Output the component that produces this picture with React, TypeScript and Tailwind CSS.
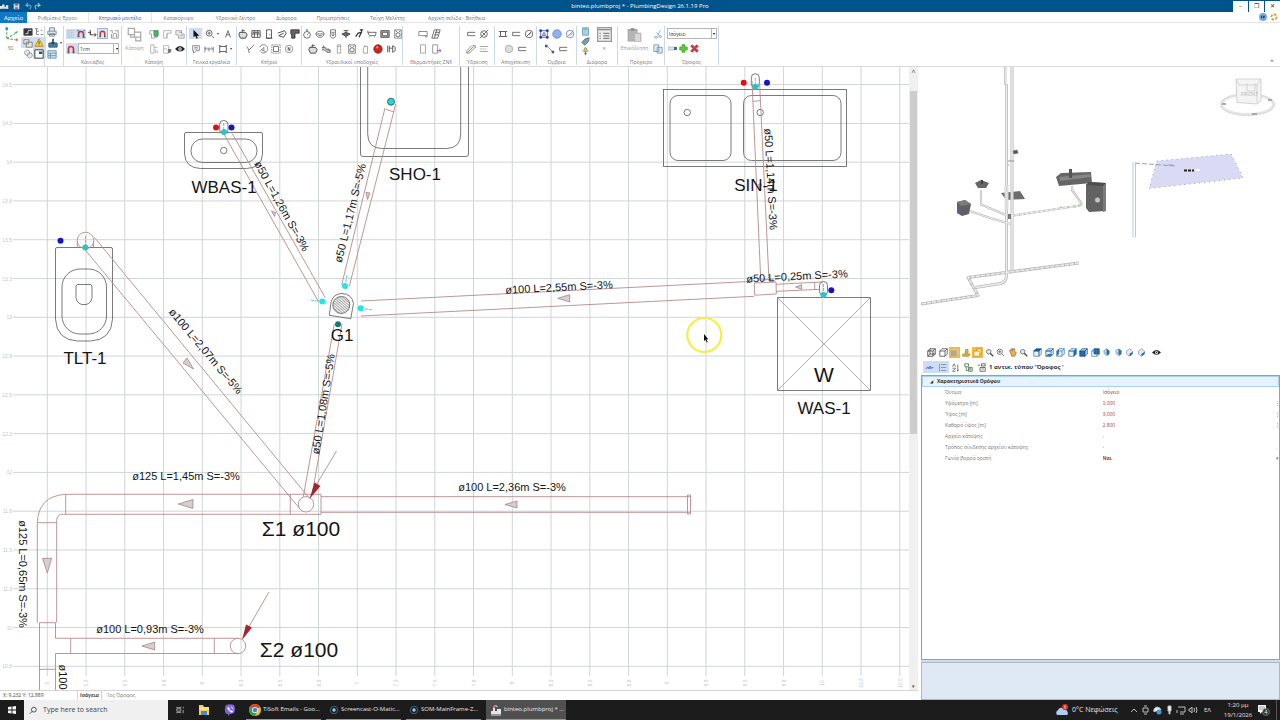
import { ReactNode } from "react";
import clsx from "clsx";

const tabs = [
  { label: "Ρυθμίσεις Έργου", width: "w-[61px]" },
  { label: "Κτηριακό μοντέλο", width: "w-[64px]", active: true },
  { label: "Κατακόρυφο", width: "w-[53px]" },
  { label: "Υδρονικό δέντρο", width: "w-[61px]" },
  { label: "Διάφορα", width: "w-[41px]" },
  { label: "Προμετρήσεις", width: "w-[52px]" },
  { label: "Τεύχη Μελέτης", width: "w-[57px]" },
  { label: "Αρχική σελίδα - Βοήθεια", width: "w-[81px]" },
];

const properties = [
  { id: "name", label: "Όνομα", value: "Ισόγειο" },
  { id: "elevation", label: "Υψόμετρο [m]", value: "0,000", mark: "⋮" },
  { id: "height", label: "Ύψος [m]", value: "3,000", mark: "⋮" },
  { id: "clear", label: "Καθαρό ύψος [m]", value: "2,800", mark: "⋮" },
  { id: "file", label: "Αρχείο κάτοψης", value: "-" },
  { id: "link", label: "Τρόπος σύνδεσης αρχείου κάτοψης", value: "-", mark: "." },
  { id: "north", label: "Γωνία βορρά ορατή", value: "Ναι", mark: "▾", bold: true },
];

// All glyphs are drawn on a 12x12 grid
const glyphs: Record<string, ReactNode> = {
  axes: (
    <>
      <path d="M3 10 3 2M3 10l7-4M3 10l7 1" stroke="#6fae7d" strokeDasharray="2 1" />
      <path d="m9 5 3-1-1 2z" fill="#34b44a" stroke="none" />
      <circle cx="3" cy="2" r="1.2" fill="#2d8fd5" stroke="none" />
      <circle cx="11" cy="11" r="1" fill="#d66" stroke="none" />
    </>
  ),
  view: (
    <>
      <path d="M1 2h10v8H1z" fill="#333" />
      <path d="M3 8h3V5M6 4h4" stroke="#fff" />
    </>
  ),
  tree: <path d="M1 2h4M3 2v7h3M3 5h3M8 4h2M8 9h3" stroke="#777" />,
  layers: <path d="M1 2h6v5H1zM4 5h7v6H4z" fill="#e8e8da" stroke="#777" />,
  warn: (
    <>
      <path d="m6 1 5 9H1z" fill="#ffd42a" stroke="#a8851c" />
      <path d="M6 4v3M6 8v1" stroke="#222" />
    </>
  ),
  cubes: <path d="m2 3 3-2 3 2v3L5 8 2 6zM5 6l3-2 3 2v3l-3 2-3-2z" fill="#e7eef0" stroke="#8a9aa0" />,
  windowIcon: (
    <>
      <path d="M1 1h10v10H1z" fill="#fff" stroke="#222" />
      <path d="M6 3h4v3H6z" fill="#35506e" stroke="none" />
    </>
  ),
  printer: <path d="M3 5V1h6v4M1 5h10v4H1zM3 8h6v3H3z" fill="#dde6ec" stroke="#6f8490" />,
  save: (
    <>
      <path d="M1 6h10v5H1z" fill="#4a7a9c" stroke="#31536d" />
      <path d="M5 1h2v4h2L6 8 3 5h2z" fill="#234a69" stroke="none" />
    </>
  ),
  sheet: <path d="M1 2h10v9H1zM1 5h10M1 8h10M4 5v6" fill="#cfe1ee" stroke="#5f8fb0" />,
  dots: <path d="M2 2h8M2 4h8M2 6h8M2 8h8M2 10h8" stroke="#a9b7cc" strokeDasharray="1 1" />,
  snap: (
    <>
      <path d="M3 10V6a3 3 0 0 1 6 0v4" stroke="#a23b50" strokeWidth="2" />
      <path d="M1 2h3M9 2h2M2 9h2M8 10h3" stroke="#4a5a80" />
    </>
  ),
  ortho: <path d="M4 1v6h7M1 4h3v3M9 5l2 2-2 2" stroke="#333" />,
  magnet: (
    <>
      <path d="M3 10V6a3 3 0 0 1 6 0v4" stroke="#c33a3a" strokeWidth="2" />
      <path d="M2 10h2M8 10h2" stroke="#555" strokeWidth="2" />
    </>
  ),
  magnetGrey: <path d="M1 2h3v3M7 2h4v9H3V6M5 10V7a2 2 0 0 1 4 0v3" stroke="#8d8d8d" />,
  plan: <path d="M1 1h5v3h5v7H7V8H3V6H1zM6 4v4M3 6h3M7 8h4" stroke="#aaa" />,
  pin: (
    <>
      <path d="M1 2h6v9H3V6H1z" stroke="#999" />
      <path d="M6 2h5v6l-2 2-3-2z" fill="#4fb466" stroke="#3a8b4c" />
    </>
  ),
  planA: <path d="M2 11V2h9v3H6v6zM6 5v6" stroke="#aaa" />,
  planB: <path d="M1 2h7v4h3v5H4V7H1zM5 4h3M6 8h3" stroke="#999" fill="#eee" />,
  planC: <path d="M2 1h4v10H2zM6 4h4M8 6v5M10 8v3" stroke="#aaa" />,
  planD: (
    <>
      <path d="M2 2h6v9H2zM2 6h4" stroke="#aaa" />
      <path d="M7 6h4v4l-4 1z" fill="#777" stroke="none" />
    </>
  ),
  eye: (
    <>
      <path d="M0 6q6-7 12 0-6 6-12 0z" fill="#222" stroke="none" />
      <circle cx="6" cy="6" r="2" fill="#fff" stroke="none" />
      <circle cx="6" cy="6" r="1" fill="#222" stroke="none" />
    </>
  ),
  pointer: <path d="M3 1v9l2-2 2 4 1-1-1-3h3z" fill="#111" stroke="none" />,
  zoom: (
    <>
      <circle cx="5" cy="5" r="3.5" />
      <path d="m8 8 3 3M3 5h4M5 3v4" />
    </>
  ),
  letterA: <path d="M3 10 6 2l3 8M4 7h4" stroke="#555" />,
  note: <path d="M2 2h8v6H6l-3 3V8H2zM4 4h4M4 6h4" stroke="#777" />,
  dimension: <path d="M1 3v7M11 3v7M6 4v5M1 6h10M1 6l2-2M11 6 9 4" stroke="#777" />,
  frame: <path d="M2 3h8v6H2zM1 2h2M9 2h2M1 10h2M9 10h2" stroke="#444" />,
  cup: <path d="M2 4h7l2 3-2 4H3L1 7zM5 4V1l3 1" stroke="#333" fill="#ddd" />,
  grid4: <path d="M1 2h10v8H1zM4 2v8M8 2v8M1 6h10M2 4h8" stroke="#444" />,
  door: <path d="M3 11V1h6v10zM7 6v1M2 11h8" stroke="#444" />,
  roof: <path d="m1 5 8-3 2 3-3 5-6-2 6-3" stroke="#333" />,
  corner: <path d="M1 1h10v4H6v6H2V6H1z" fill="#666" stroke="#333" />,
  brush: <path d="m2 3 2 3 1 5M11 1 5 7" stroke="#666" />,
  globe: <path d="M2 4a5 5 0 1 1 2 6M2 9l5-5M7 4v4M4 7l5 2" stroke="#777" />,
  square: (
    <>
      <path d="M1 1h10v10H1z" stroke="#777" strokeDasharray="2 1" />
      <path d="M3 3h6v6H3z" stroke="#666" />
    </>
  ),
  circleN: (
    <>
      <circle cx="6" cy="6" r="4.5" stroke="#888" />
      <path d="M5 8V4l2 4V4" />
    </>
  ),
  clock: (
    <>
      <circle cx="6" cy="7" r="4" />
      <path d="M6 7l2-2M5 1h2M6 1v2" />
    </>
  ),
  basin: <path d="M1 5q5-5 10 0-1 5-5 5T1 5zM1 6h10M4 8h4" stroke="#666" />,
  toilet: <path d="M3 1h6v4q1 6-3 6T3 5zM4 4h4M5 5v3h2V5" stroke="#666" />,
  valve: <path d="M6 1v3M3 2h6M1 6l5-2 5 2-5 3zM6 9v2" fill="#666" stroke="#444" />,
  tap: <path d="M9 1v3L5 5l-3 4M9 4l-3 6M7 1h4" stroke="#333" strokeWidth="1.500" />,
  bath: <path d="M1 4h10l-1 4H3L1 4V2M3 10v-1M9 10v-1" stroke="#555" />,
  hob: (
    <>
      <path d="M1 2h10v8H1z" fill="#aaa" stroke="#444" />
      <path d="M3 4h6v4H3z" fill="#fff" />
    </>
  ),
  washer: (
    <>
      <path d="M2 1h8v10H2z" stroke="#777" />
      <circle cx="6" cy="7" r="2.5" />
      <path d="M3 2l2 2M9 2 7 4" />
    </>
  ),
  faucet: <path d="M1 4h4l2 3h4v3H7L4 7H1M3 2v2M8 5l2 2" stroke="#555" fill="#ccc" />,
  tank: <path d="M4 1h4v10H4zM4 3h4" stroke="#999" />,
  boiler: <path d="M5 3h4v8H4V6zM6 1v2" stroke="#999" />,
  redBall: (
    <>
      <circle cx="6" cy="6" r="5" fill="#c9281c" stroke="#8d1c12" />
      <circle cx="5" cy="4" r="1.5" fill="#ef7a63" stroke="none" />
    </>
  ),
  meter: <path d="M2 2v8M4 2v8M4 5h4M8 2v8l3-2V4z" stroke="#444" />,
  heater: <path d="M1 3h10v5H1zM8 8l2 2 1-2" stroke="#777" />,
  solar: <path d="M4 1h7L8 11H1zM5 4h5M4 7h5M7 1 4 11" stroke="#555" />,
  tallBox: <path d="M3 1h6v10H3z" stroke="#999" />,
  boxArrow: (
    <>
      <path d="M2 1h6v10H2z" stroke="#888" />
      <path d="M7 8h5M10 6l2 2-2 2" stroke="#7a4a8a" />
    </>
  ),
  pipe: <path d="M11 4H2v4h9" stroke="#555" />,
  pump: (
    <>
      <circle cx="6" cy="6" r="4" />
      <path d="M1 11 11 1M4 4l4 4" />
    </>
  ),
  coil: <path d="m1 8 6-6M2 10l7-7M4 11l7-7M1 8v3h3M8 2h3v3" stroke="#777" />,
  lines: <path d="M1 3h10M1 6h2M4 6h2M7 6h2M1 9h10" stroke="#999" />,
  sump: <path d="M3 3h6v6H3zM1 3h2M1 9h2M9 3h2M9 9h2" stroke="#444" />,
  drain: (
    <>
      <circle cx="6" cy="6" r="4.5" />
      <path d="m3 9 6-6M6 7l2-2" />
    </>
  ),
  disc: <circle cx="6" cy="6" r="4.5" fill="#ddd" stroke="#aaa" />,
  rainBox: (
    <>
      <path d="M2 2h8v8H2zM4 8l2-4 2 4z" stroke="#3a52b8" />
      <path d="M1 1h2v2H1zM9 1h2v2H9zM1 9h2v2H1zM9 9h2v2H9z" fill="#24389a" stroke="#24389a" />
    </>
  ),
  rainDisc: <circle cx="6" cy="6" r="5" fill="#8fb4ec" stroke="#5b7fd0" />,
  rainDrain: (
    <>
      <circle cx="6" cy="6" r="4.5" stroke="#6a7fd0" />
      <path d="m2 10 8-8M6 8l3-3" stroke="#6a7fd0" />
    </>
  ),
  diagonal: (
    <>
      <path d="m2 2 8 8" stroke="#6a7fd0" />
      <path d="M0 1h3v3H0zM8 8h3v3H8z" fill="#3a52b8" stroke="none" />
    </>
  ),
  calc: <path d="M2 1h8v10H2zM4 3h4" fill="#a5d2e2" stroke="#5d94aa" />,
  tag: <path d="m1 7 5-5 5-1-1 5-5 5z" fill="#7d9aa8" stroke="#51707e" />,
  robot: (
    <>
      <circle cx="6" cy="3" r="2" fill="#e5c84d" stroke="#9a8a3a" />
      <path d="M2 5l4 2 4-2M6 6v5M4 9h4" stroke="#5560b0" />
    </>
  ),
  report: (
    <>
      <path d="M.5.5h11v11H.5z" fill="#eee" stroke="#999" />
      <path d="M1 2h10M5 5h5M5 7h5M5 9h5M2 5h1M2 7h1M2 9h1" stroke="#888" />
    </>
  ),
  clipboard: (
    <>
      <path d="M1 2h7v9H1z" fill="#b5b5b5" stroke="#aaa" />
      <path d="M3 1h3v2H3z" fill="#8a8a8a" stroke="none" />
      <path d="M6 5h5v7H6z" fill="#d8d8d8" stroke="#b5b5b5" />
    </>
  ),
  cut: <path d="m9 1-4 7M4 4l4 4M2 9h3v2H2zM7 8h3v2H7z" stroke="#8fb5c0" />,
  copy: <path d="M1 1h6v8H1zM5 4h6v7H5z" fill="#dfeaf2" stroke="#7593ab" />,
  rename: (
    <>
      <path d="M0 4h10v4H0z" fill="#dde6f0" stroke="#a8b4c4" />
      <path d="M8 4h4v4H8z" fill="#3f6d94" stroke="none" />
    </>
  ),
  plus: <path d="M4 1h4v3h3v4H8v3H4V8H1V4h3z" fill="#5bc83d" stroke="#45a52c" />,
  cross: <path d="m1 3 2-2 3 3 3-3 2 2-3 3 3 3-2 2-3-3-3 3-2-2 3-3z" fill="#d13c46" stroke="#a62a34" />,
  wireCube: <path d="M1 4h7v7H1zM1 4l3-3h7v7l-3 3M8 4l3-3M4 1v7h7M4 8l-3 3" stroke="#333" />,
  cube: <path d="M1 4h7v7H1zM1 4l3-3h7v7l-3 3M8 4l3-3" stroke="#444" />,
  shaded: (
    <>
      <path d="M1 3h8v8H1z" fill="#a9a9a0" stroke="none" />
      <path d="m9 3 2-2v8l-2 2zM1 3l2-2h8L9 3z" fill="#c9c9bf" stroke="none" />
    </>
  ),
  sun: <path d="M1 8h10l-2 3H1zM5 2h3v5H4z" fill="#e0b93c" stroke="#a88830" />,
  box: <path d="M1 4h8v7H1zM5 1h6v7H9M5 1v3" fill="#fff3c8" stroke="#c78f1e" />,
  magnifier: (
    <>
      <circle cx="5" cy="5" r="3" fill="#e6ecf0" />
      <path d="m7 7 4 4" strokeWidth="2" />
    </>
  ),
  hand: <path d="M3 6 2 3l2 1V1h2v3l1-3h2v4l2 1-2 5H5z" fill="#ecae53" stroke="#9c7440" />,
  faceTop: (
    <>
      <path d="M1 4h7v7H1zM8 4l3-3v7l-3 3M1 4l3-3h7L8 4z" fill="#dfeaf5" stroke="#336a9c" />
      <path d="m1 11 3-3h7l-3 3z" fill="#3a78b0" stroke="none" />
    </>
  ),
  faceFront: (
    <>
      <path d="M1 4h7v7H1z" fill="#1e6cb0" stroke="#1b4f80" />
      <path d="m1 4 3-3h7L8 4zM8 4l3-3v7l-3 3z" fill="#b8d4ee" stroke="#1b4f80" />
    </>
  ),
  faceBack: (
    <>
      <path d="M4 1h7v7H4z" fill="#1e6cb0" stroke="#1b4f80" />
      <path d="M1 4h7v7H1zM1 4l3-3M8 11l3-3" stroke="#4477a3" />
    </>
  ),
  faceLeft: (
    <>
      <path d="M1 4h7v7H1zM1 4l3-3h7v7l-3 3M8 4l3-3" fill="#e9f1f8" stroke="#4477a3" />
      <path d="m1 4 3-3v7l-3 3z" fill="#3a78b0" stroke="none" />
    </>
  ),
  faceRoof: (
    <>
      <path d="M1 4h7v7H1zM8 4l3-3v7l-3 3z" fill="#eef4fa" stroke="#4477a3" />
      <path d="m1 4 3-3h7L8 4z" fill="#145c9f" stroke="#145c9f" />
    </>
  ),
  faceSide: (
    <>
      <path d="M1 4h7v7H1zM1 4l3-3h7L8 4z" fill="#e9f1f8" stroke="#4477a3" />
      <path d="m8 4 3-3v7l-3 3z" fill="#1e6cb0" stroke="#1e6cb0" />
    </>
  ),
  iso: (
    <>
      <path d="m6 1 4 3-4 3-4-3z" fill="#d3e4f3" stroke="#6b93b5" />
      <path d="M6 7V1l4 3v4l-4 3z" fill="#2d6ea6" stroke="none" />
      <path d="m2 4 4 3v4L2 8z" fill="#a5c7e3" stroke="none" />
    </>
  ),
  isoLow: (
    <>
      <path d="m6 1 4 3v4l-4 3-4-3V4z" fill="#e2eaf1" stroke="#86a3bc" />
      <path d="m6 11 4-3V5L6 8z" fill="#1f649f" stroke="none" />
    </>
  ),
  wave: <path d="M1 7h2l1-2 1 3 2-4 1 4 1-2h2" stroke="#3d63b8" />,
  category: <path d="M4 2h7M4 6h7M4 10h7M2 1v10" stroke="#6e87a0" />,
  sortAz: <path d="M2 5l2-4 2 4M2 7h4l-4 4h4M9 2v8M8 9l1 2 1-2" stroke="#555" />,
  expand: <path d="M1 1h5v4H1zM3 5v5h3M6 6h5v5H6zM7 8h3M8 7v3" stroke="#3d6b3d" />,
  collapse: <path d="M1 3h3M6 1h5v3H6zM4 6h7v5H4zM6 8h3" stroke="#444" />,
};

const Glyph = ({ name, size = "size-[10px]" }: { name: string; size?: string }) => (
  <svg viewBox="0 0 12 12" className={clsx(size, "shrink-0")} fill="none" stroke="#555" aria-hidden="true">
    {glyphs[name]}
  </svg>
);

function Tool({ name, active, menu }: { name: string; active?: boolean; menu?: boolean }) {
  return (
    <button
      type="button"
      aria-label={name}
      className={clsx(
        "flex h-[11px] shrink-0 items-center justify-center",
        menu ? "w-[19px] gap-0.5" : "w-[13px]",
        active && "bg-[#cfdcf1]",
      )}
    >
      <Glyph name={name} />
      {menu && <span className="text-[4px] text-[#444]">▾</span>}
    </button>
  );
}

const Row = ({ children, className }: { children: ReactNode; className?: string }) => (
  <div className={clsx("flex h-[15px] items-center", className ?? "justify-center")}>{children}</div>
);

function Group({ label, width, children }: { label: string; width: string; children: ReactNode }) {
  return (
    <section className={clsx("mt-[3px] mb-px flex shrink-0 flex-col border-r border-[#c9dae9]", width)}>
      <div className="h-[30px]">{children}</div>
      <h2 className="h-2.5 whitespace-nowrap text-center leading-[12px] text-[#777]">{label}</h2>
    </section>
  );
}

function BigTool({ icon, label, width }: { icon: string; label: string; width: string }) {
  return (
    <button type="button" className={clsx("flex h-[30px] flex-col items-center text-[#999]", width)}>
      <span className="flex h-[17px] items-center">
        <Glyph name={icon} size="size-[15px]" />
      </span>
      <span className="leading-[10px]">{label}</span>
    </button>
  );
}

function Combo({ label, value, width }: { label: string; value: string; width: string }) {
  return (
    <div className={clsx("relative", width)}>
      <select
        aria-label={label}
        defaultValue={value}
        className="block h-[11px] w-full appearance-none border border-[#b5b5b5] bg-white pl-px leading-[8px] text-[#333]"
      >
        <option>{value}</option>
      </select>
      <span className="pointer-events-none absolute inset-y-0 right-0 w-1.5 border-l border-[#b5b5b5] text-center text-[4px] leading-[11px]">
        ▾
      </span>
    </div>
  );
}

function TitleBar() {
  return (
    <header className="grid h-3 shrink-0 grid-cols-[1fr_auto_1fr] items-center bg-[#00548c] text-[6px] text-white">
      <div className="flex items-center gap-1">
        <svg viewBox="0 0 12 10" className="h-2 w-[9px]" aria-hidden="true">
          <path d="M0 9V5h3V3h3v3h2V4h3v5z" fill="#e8edf2" />
          <path d="M1 8h9" stroke="#879aae" />
        </svg>
        <svg viewBox="0 0 10 10" className="size-[7px]" aria-hidden="true">
          <path d="M1 1h8v8H1z" fill="#d8dcf2" />
          <path d="M3 1h4v3H3zM3 6h4v3H3z" fill="#7a5fa8" />
        </svg>
        <svg viewBox="0 0 20 10" className="h-2 w-[18px]" fill="none" strokeWidth="1.300" aria-hidden="true">
          <path d="M2 4h4q3 1 0 5M4 1 1 4l3 2" stroke="#6fb0ee" />
          <path d="M18 4h-4q-3 1 0 5M16 1l3 3-3 2" stroke="#9ec4b4" />
        </svg>
      </div>
      <h1 className="whitespace-nowrap">binteo.plumbproj * - PlumbingDesign 26.1.19 Pro</h1>
      <div className="flex justify-end gap-px">
        {["–", "❐", "✕"].map((sign) => (
          <button
            key={sign}
            type="button"
            aria-label={sign}
            className="h-[11px] w-[15px] bg-white leading-[10px] text-[#333]"
          >
            {sign}
          </button>
        ))}
      </div>
    </header>
  );
}

function TabBar() {
  return (
    <nav className="flex h-[11px] shrink-0 border-b border-[#e4e4e4] bg-white leading-[12px] text-[#777]">
      <button type="button" className="h-[11px] w-[27px] shrink-0 bg-[#0f79c8] text-[6px] text-white">
        Αρχείο
      </button>
      {tabs.map((tab) => (
        <button
          key={tab.label}
          type="button"
          className={clsx(
            "shrink-0 whitespace-nowrap text-center",
            tab.width,
            tab.active && "border-x border-[#e4e4e4] text-[#2b5f9e]",
          )}
        >
          {tab.label}
        </button>
      ))}
      <div className="ml-auto flex items-center gap-[3px] pr-0.5">
        <svg viewBox="0 0 12 12" className="size-2" aria-hidden="true">
          <circle cx="6" cy="6" r="6" fill="#7ba6dc" />
          <path d="M3 4h2v4H3zM6 4h3v2H8v2H6z" fill="#174a96" />
        </svg>
        <svg viewBox="0 0 12 12" className="size-2" fill="none" aria-hidden="true">
          <circle cx="6" cy="6" r="4" stroke="#e0933a" strokeWidth="2.5" strokeDasharray="4 2" />
        </svg>
      </div>
    </nav>
  );
}

function Ribbon() {
  return (
    <div className="flex h-11 shrink-0 border-b border-[#dadada] bg-white">
      <div className="mt-[3px] flex w-[45px] shrink-0 border-r border-[#c9dae9]">
        <button type="button" className="flex w-[21px] flex-col items-center text-[#777]">
          <Glyph name="axes" size="size-[15px]" />
          <span className="leading-[14px]">3D</span>
        </button>
        <div className="grid h-[33px] w-[23px] grid-cols-2">
          <Tool name="view" />
          <Tool name="tree" />
          <Tool name="layers" active />
          <Tool name="warn" active />
          <Tool name="cubes" />
          <Tool name="windowIcon" active />
        </div>
      </div>
      <div className="mt-[3px] flex w-[19px] shrink-0 flex-col border-r border-[#c9dae9]">
        <Tool name="printer" />
        <Tool name="save" menu />
        <Tool name="sheet" />
      </div>
      <Group label="Κάνναβος" width="w-[58px]">
        <Row className="justify-between px-0.5">
          <span className="flex bg-[#cfdcf1]">
            <Glyph name="dots" />
            <Glyph name="snap" />
          </span>
          <Glyph name="ortho" />
          <span className="border border-[#9db8e0] bg-[#dce6f6]">
            <Glyph name="magnet" size="size-[9px]" />
          </span>
          <Glyph name="magnetGrey" />
        </Row>
        <Row className="pl-0.5">
          <span className="flex h-[11px] w-3 items-center bg-[#cfdcf1]">
            <Glyph name="magnet" />
          </span>
          <Combo label="Κάνναβος" value="1cm" width="w-[41px]" />
        </Row>
      </Group>
      <Group label="Κάτοψη" width="w-[65px]">
        <div className="flex">
          <BigTool icon="plan" label="Κάτοψη" width="w-[25px]" />
          <div>
            <Row className="justify-start">
              <Tool name="pin" />
              <Tool name="planA" />
              <Tool name="planB" />
            </Row>
            <Row className="justify-start">
              <Tool name="planC" />
              <Tool name="planD" />
              <Tool name="eye" />
            </Row>
          </div>
        </div>
      </Group>
      <Group label="Γενικά εργαλεία" width="w-[50px]">
        <Row>
          <Tool name="pointer" active />
          <Tool name="zoom" menu />
          <Tool name="letterA" />
        </Row>
        <Row>
          <Tool name="note" />
          <Tool name="dimension" />
          <Tool name="frame" menu />
        </Row>
      </Group>
      <Group label="Κτήριο" width="w-[65px]">
        <Row>
          {["cup", "grid4", "door", "roof", "corner"].map((name) => (
            <Tool key={name} name={name} />
          ))}
        </Row>
        <Row>
          {["brush", "globe", "square", "circleN"].map((name) => (
            <Tool key={name} name={name} />
          ))}
        </Row>
      </Group>
      <Group label="Υδραυλικοί υποδοχείς" width="w-[101px]">
        <Row className="-mx-1 justify-center">
          {["clock", "basin", "toilet", "valve", "tap", "bath", "hob", "washer"].map((name) => (
            <Tool key={name} name={name} />
          ))}
        </Row>
        <Row>
          {["cup", "faucet", "tank", "washer", "boiler", "redBall", "meter"].map((name) => (
            <Tool key={name} name={name} />
          ))}
        </Row>
      </Group>
      <Group label="Θερμαντήρες ΖΝΧ" width="w-[57px]">
        <Row className="justify-center pr-1">
          <Tool name="heater" />
          <Tool name="solar" />
        </Row>
        <Row className="justify-center pr-1">
          <Tool name="tallBox" />
          <Tool name="boxArrow" />
        </Row>
      </Group>
      <Group label="Ύδρευση" width="w-[35px]">
        <Row>
          <Tool name="pipe" />
          <Tool name="pump" />
        </Row>
        <Row>
          <Tool name="coil" />
          <Tool name="lines" />
        </Row>
      </Group>
      <Group label="Αποχέτευση" width="w-[42px]">
        <Row>
          <Tool name="sump" />
          <Tool name="pipe" />
          <Tool name="drain" />
        </Row>
        <Row>
          <Tool name="disc" />
          <Tool name="pipe" />
        </Row>
      </Group>
      <Group label="Όμβρια" width="w-[40px]">
        <Row>
          <Tool name="rainBox" />
          <Tool name="rainDisc" />
          <Tool name="rainDrain" />
        </Row>
        <Row>
          <Tool name="diagonal" />
          <Tool name="pipe" />
        </Row>
      </Group>
      <Group label="Διάφορα" width="w-[41px]">
        <div className="flex">
          <div className="w-4">
            {["calc", "tag", "robot"].map((name) => (
              <button key={name} type="button" aria-label={name} className="flex h-2.5 w-4 items-center justify-center">
                <Glyph name={name} size="size-[9px]" />
              </button>
            ))}
          </div>
          <BigTool icon="report" label="▾" width="w-[23px]" />
        </div>
      </Group>
      <Group label="Πρόχειρο" width="w-[47px]">
        <div className="flex justify-between">
          <BigTool icon="clipboard" label="Επικόλληση" width="w-[34px]" />
          <div>
            <Row>
              <Tool name="cut" />
            </Row>
            <Row>
              <Tool name="copy" />
            </Row>
          </div>
        </div>
      </Group>
      <Group label="Όροφος" width="w-[54px]">
        <Row>
          <Combo label="Όροφος" value="Ισόγειο" width="w-[50px]" />
        </Row>
        <Row className="justify-start pl-0.5">
          {["rename", "plus", "cross"].map((name) => (
            <button key={name} type="button" aria-label={name} className="flex w-[11px] justify-center">
              <Glyph name={name} size="size-[9px]" />
            </button>
          ))}
        </Row>
      </Group>
      <button type="button" aria-label="collapse" className="mt-auto ml-auto w-4 text-[6px] leading-[10px]">
        ^
      </button>
    </div>
  );
}

const gridX = Array.from({ length: 23 }, (_, i) => ({ at: 47.3 + 38.75 * i, value: 5 + i / 4 }));
const gridY = Array.from({ length: 16 }, (_, i) => ({ at: 84.6 + 38.78 * i, value: 14.5 - i / 4 }));

const rulerLabel = (value: number) => String(Math.round(value * 10 + 0.001) / 10);

const pipeLabels = [
  { text: "ø50 L=1,26m S=-3%", x: 282, y: 206, turn: 61 },
  { text: "ø50 L=1,17m S=-5%", x: 350, y: 213, turn: -76 },
  { text: "ø100 L=2,07m S=-5%", x: 206, y: 351, turn: 50 },
  { text: "ø50 L=1,08m S=-5%", x: 323, y: 404, turn: -81 },
  { text: "ø100 L=2,55m S=-3%", x: 559, y: 287, turn: -3 },
  { text: "ø50 L=0,25m S=-3%", x: 797, y: 276, turn: -3 },
  { text: "ø50 L=1,14m S=-3%", x: 771, y: 179, turn: 87 },
  { text: "ø125 L=1,45m S=-3%", x: 186, y: 476, turn: 0 },
  { text: "ø100 L=2,36m S=-3%", x: 512, y: 487, turn: 0 },
  { text: "ø100 L=0,93m S=-3%", x: 150, y: 629, turn: 0 },
  { text: "ø125 L=0,65m S=-3%", x: 23, y: 574, turn: 90 },
  { text: "ø100", x: 63, y: 677, turn: 90 },
];

const fixtureLabels = [
  { text: "WBAS-1", x: 224, y: 187 },
  { text: "SHO-1", x: 415, y: 174 },
  { text: "SIN-1", x: 756, y: 185 },
  { text: "TLT-1", x: 85, y: 358 },
  { text: "G1", x: 342, y: 335 },
  { text: "WAS-1", x: 824, y: 408 },
];

const dots = [
  { x: 216, y: 127.5, color: "#e01010" },
  { x: 231.5, y: 127.5, color: "#1414c0" },
  { x: 60.5, y: 240.7, color: "#1414c0" },
  { x: 743.7, y: 82.7, color: "#e01010" },
  { x: 767, y: 82.7, color: "#1414c0" },
  { x: 831.3, y: 290.3, color: "#1414c0" },
  { x: 224, y: 132, color: "#2cc4cc" },
  { x: 85.3, y: 247.5, color: "#2cc4bc" },
  { x: 755.3, y: 87, color: "#22c4bc" },
  { x: 823.5, y: 295, color: "#22c8c8" },
  { x: 322.3, y: 301.5, color: "#1fe6ea" },
  { x: 345, y: 286, color: "#1fe6ea" },
  { x: 360.7, y: 308.3, color: "#1fe6ea" },
  { x: 338, y: 324.3, color: "#127878" },
];

function PlanCanvas() {
  return (
    <svg
      viewBox="0 67 909 623"
      preserveAspectRatio="xMinYMin slice"
      className="block min-h-0 w-full flex-1 bg-white font-['Liberation_Sans',Arial,sans-serif]"
    >
      <defs>
        <pattern id="hatch" width="2" height="2" patternUnits="userSpaceOnUse" patternTransform="rotate(-50)">
          <path d="M0 0v2" stroke="#444" />
        </pattern>
      </defs>

      <g stroke="#d0d5d6">
        {gridX.map(({ at }) => (
          <path key={at} d={`M${at} 67V676`} />
        ))}
        {gridY.map(({ at }) => (
          <path key={at} d={`M13 ${at}H909`} />
        ))}
      </g>
      <g className="fill-[#c2c7ca] text-[5px]">
        {gridY.map(({ at, value }) => (
          <text key={at} x={12} y={at + 2} textAnchor="end">
            {rulerLabel(value)}
          </text>
        ))}
        {gridX.map(({ at, value }) => (
          <text key={at} transform={`translate(${at + 2} 683) rotate(-90)`} textAnchor="middle">
            {rulerLabel(value)}
          </text>
        ))}
      </g>

      {/* fixtures */}
      <g fill="none" stroke="#585858" strokeWidth="0.8">
        <path d="M186 132.5h75q1.500 0 1.500 1.500v20q-1 14-16 14.500h-46q-15-.5-16-14.500v-20q0-1.500 1.500-1.500z" />
        <rect x="191" y="139" width="66" height="23.500" rx="11.500" />
        <circle cx="223.700" cy="150.500" r="3.200" />
        <path d="M57 247.500h54q1.500 0 1.500 1.500v70q-1 21-22 22h-13q-21-1-22-22v-70q0-1.500 1.500-1.500z" />
        <rect x="62" y="269" width="44.500" height="65" rx="18" />
        <path d="M78 284.500h12q2 0 2 2v11q-1 6-6 7h-4q-5-1-6-7v-11q0-2 2-2z" />
        <path d="M360.500 67v87q0 2.500 2.500 2.500h103q2.500 0 2.500-2.500V67M367.700 67v67q0 14 14 14.500h65q14-.5 14-14.500V67" />
        <rect x="663.500" y="89.500" width="183" height="77" />
        <rect x="670" y="95.500" width="61" height="65" rx="8" />
        <rect x="743.500" y="95.500" width="97.500" height="65" rx="8" />
        <circle cx="687.200" cy="112.500" r="3.200" />
        <circle cx="760.200" cy="112.500" r="3.200" />
        <path d="M777.500 297.500h93v93h-93z" />
        <path d="m777.500 297.500 93 93M870.500 297.500l-93 93" stroke="#999" />
        <path d="M329.300 315.300l1.700-13q2-8.500 11-8.800 10 .5 11.500 10l-2.800 15.200z" />
        <circle cx="341.300" cy="305" r="8.500" fill="url(#hatch)" />
        <rect x="219.500" y="120.500" width="8.500" height="13" rx="4" />
        <rect x="751.300" y="73.700" width="8" height="14" rx="4" />
        <rect x="819.500" y="281.500" width="8" height="14" rx="4" />
      </g>

      {/* drain pipes */}
      <g fill="none" stroke="#b78a8c" strokeWidth="0.9">
        <circle cx="85.500" cy="240.500" r="8.300" />
        <path d="M77.300 241v6.500M93.500 241v6.500" />
        <path d="M94.500 237.500 310 499M85 249.700l215 259.300" />
        <path d="m223.700 133.700 94.600 167.600M232.300 133.700l93 164" />
        <path d="m385 108-43.300 176.700M395.700 104l-46.400 182.300M385.700 109.300l8 2.500" />
        <path d="m334.300 324-31 172.700M342 324l-30 171" />
        <path d="m361 301 392.300-19.700M361 316l393.300-19.700" />
        <path d="M754.300 283l21.700-1 .300 12-21.600 1.200zM776 284.300l46-2.300M776.300 291.300l44-2M814.700 282.500v7" />
        <path d="m752 81 8.700 198M759.500 81l9.500 200M752.500 101.300l8-.6M760.500 280l13-.7" />
        <path d="M65.300 494.300H321v20H65.300M65.700 494.300v20M290.300 494.300v20" />
        <path d="M321 496.700h369M321 512.300h369M687.500 495v19h3v-19z" />
        <path d="M65.300 494.300q-27 2-28 28.400V622.500M65.300 514.300h-4q-4.500 1-4.600 6V622.500M37.300 522.700h19.400" />
        <path d="M39.500 690v-67.300h16v15.600H238M55.500 690v-36.500H238M39.500 669.300h16M70.700 638.300v15.200M214.300 638.300v15.200" />
        <circle cx="306" cy="504.300" r="7.700" fill="#fff" />
        <circle cx="238" cy="646" r="7.700" />
        <path d="M336.500 451 315 487M269 592l-22 38" />
      </g>
      <g fill="#a3262c">
        <path d="m309.500 499 5-16.500 6 3.500zM242 640l4-15.500 6 3z" />
      </g>
      <g fill="#d5d0cf" stroke="#a48487" strokeWidth="0.800">
        <path d="m178.300 504 14.700-4.500v9zM505 504.500l12-3.500v7zM142 646l12.700-4v8zM42.500 558.300h9.200L47.300 573z" />
        <path d="M187 358l6.500 11-10.500-6zM557.700 298.300l12-3.600v7.300zM795.700 287l6-2.300v4.600zM366 192.300l4 .7-2.500 6.500zM271.500 211l4 1.500-1 4zM758.500 184l3 0-1.500 4z" />
      </g>

      <g fill="none" stroke="#39d9dc" strokeDasharray="3 1">
        <path d="M85.500 236v11M223.700 123v8M322 301.500l-12-1.500M345 286l2-11M361 308.300l12 1.700M755.300 78v9M823.500 284v9" />
      </g>
      {dots.map((dot) => (
        <circle key={`${dot.x}-${dot.y}`} cx={dot.x} cy={dot.y} r="3" fill={dot.color} />
      ))}
      <circle cx="391" cy="101.700" r="3.500" fill="#1fd8d8" stroke="#376a6c" />

      <g className="fill-[#151515] text-[11px]" textAnchor="middle" dominantBaseline="central">
        {pipeLabels.map((label) => (
          <text key={label.text + label.x} transform={`translate(${label.x} ${label.y}) rotate(${label.turn})`}>
            {label.text}
          </text>
        ))}
      </g>
      <g className="fill-[#151515] text-[17px]" textAnchor="middle" dominantBaseline="central">
        {fixtureLabels.map((label) => (
          <text key={label.text} x={label.x} y={label.y}>
            {label.text}
          </text>
        ))}
      </g>
      <g className="fill-[#151515] text-[21px]" textAnchor="middle" dominantBaseline="central">
        <text x="824" y="374">W</text>
        <text x="301" y="528">Σ1 ø100</text>
        <text x="299" y="649">Σ2 ø100</text>
      </g>

      <circle cx="704.300" cy="335" r="17" fill="none" stroke="#f1f04a" strokeWidth="2.200" />
      <path d="M704 334v7l1.500-1.300 1.200 2.700 1-.5-1.200-2.600h1.800z" fill="#111" />
    </svg>
  );
}

function ScrollBar() {
  return (
    <div className="flex w-[9px] shrink-0 flex-col items-center bg-[#f0f0f0] text-[#444]">
      <button type="button" aria-label="up" className="h-6 w-full pb-3 text-[7px] leading-[12px]">
        ^
      </button>
      <div className="h-[55%] w-[7px] bg-[#cdcdcd]" />
      <button type="button" aria-label="down" className="mt-auto h-2 w-full leading-[8px]">
        ▾
      </button>
    </div>
  );
}

function ModelView() {
  return (
    <svg
      viewBox="921 67 359 279"
      preserveAspectRatio="xMinYMin slice"
      className="block min-h-0 w-full flex-[279] bg-white font-['Liberation_Sans',Arial,sans-serif]"
    >
      <g fill="none" stroke="#b8b8b8" strokeWidth="3" strokeLinejoin="round">
        <path d="m1079 263-66 8.500-45 6 10 18-57 8.500" />
        <path d="M1006.500 84v191q0 7-6 8.500l-25 4M1012 67v203" />
        <path d="m970 211 20 7 21 6M981 190v14.500l25 10.500M1010 216l73-11M1072 186v4l10 14" strokeWidth="2.200" />
      </g>
      <g fill="none" stroke="#ededed" strokeWidth="1.500" strokeLinejoin="round">
        <path d="m1079 263-66 8.500-45 6 10 18-57 8.500" strokeDasharray="4 1" />
        <path d="M1006.500 84v191q0 7-6 8.500l-25 4M1012 67v203" />
        <path d="m970 211 20 7 21 6M981 190v14.500l25 10.500M1072 186v4l10 14" strokeWidth="1" />
        <path d="m1010 216 73-11" strokeDasharray="4 1" />
      </g>
      <path d="M1006 67v18M1004.500 67v18" stroke="#c9c9c9" />
      <path d="M1001 193l19-2 5 8-19 1z" fill="#6c6c6c" />
      <path d="M1004.500 185v25h4v-25zM1010.500 185v25h3v-25z" fill="#dcdcdc" />
      <path d="M1008 214h3v5h-3z" fill="#777" />
      <path d="m1013 151 4-1 1 3-4 1zM1008 161h6M1008 165h1" fill="#555" stroke="#777" strokeWidth="0.800" />
      <path d="M1056 177l5-4 30-1 1 11-33 3z" fill="#666" />
      <path d="m1059 177 31-3 1 3-31 4z" fill="#858585" />
      <path d="M1069 169h3v9h-3z" fill="#555" />
      <path d="M1086 185l3-3 17 1v28l-17 1-3-4z" fill="#626262" />
      <path d="m1086 185 3-3 17 1-3 3z" fill="#4d4d4d" />
      <path d="M1103 186l3-3v28l-3 1z" fill="#7b7b7b" />
      <circle cx="1097.500" cy="200" r="3" fill="#c4c4c4" stroke="#444" strokeWidth="0.600" />
      <path d="m975 183 6-3 8 3-3 5h-8z" fill="#666" />
      <path d="M981 180h2v4h-2z" fill="#444" />
      <path d="m957 202 8-2 6 4-2 10-7 2-5-3z" fill="#606060" />
      <path d="m957 202 8-2 6 4-10 2z" fill="#7d7d7d" />
      <path d="M958 208v5" stroke="#5a5ac0" />
      <path d="M1060 207h16M1079 205h3" stroke="#8fce83" strokeDasharray="2 5" />

      <path d="m1156.700 161 74.500-7 12 24-94 10.500z" fill="#dadaf5" stroke="#9c9cc6" strokeDasharray="1 4" />
      <path d="M1133 162v75.500M1135.500 163v74.500" stroke="#bacbd0" />
      <path d="m1135 163 40 3M1168 165h7" stroke="#94a0ae" strokeDasharray="5 2" />
      <path d="M1184 170.500h10" stroke="#222" strokeWidth="2" strokeDasharray="3 1" />
      <path d="M1196 170h4" stroke="#fff" strokeWidth="2" />

      <g fill="none" stroke="#d3d3d3">
        <ellipse cx="1247.500" cy="104.500" rx="26" ry="10" strokeWidth="3" stroke="#e5e5e5" />
        <ellipse cx="1247.500" cy="104.500" rx="27" ry="11" strokeWidth="0.600" />
        <path d="M1236 79h25v22l-4 3-20-1.500z" fill="#f4f4f4" />
        <path d="m1236 79 3 6h18l4-6M1257 85v18.500M1247 83v8h8v-8" />
        <path d="M1222 104h4M1252 114h5M1268 100h4" stroke="#a9a9a9" strokeWidth="2" />
      </g>
      <text x="1241" y="96" className="fill-[#b5b5b5] text-[5px]">
        FRONT
      </text>
    </svg>
  );
}

function ViewTools() {
  const left = ["wireCube", "cube", "shaded", "sun", "box", "magnifier", "zoom", "hand", "magnifier"];
  const right = [
    "faceRoof",
    "faceTop",
    "faceLeft",
    "faceSide",
    "faceFront",
    "faceBack",
    "iso",
    "iso",
    "isoLow",
    "isoLow",
  ];
  const cell = (name: string, i: number) => (
    <button
      key={i}
      type="button"
      aria-label={name}
      className={clsx(
        "flex size-[11px] items-center justify-center",
        (name === "shaded" || name === "box") && "bg-[#fbb936]",
      )}
    >
      <Glyph name={name} size="size-[9px]" />
    </button>
  );

  return (
    <div className="flex h-3.5 shrink-0 items-center bg-white pl-[5px]">
      <div className="flex w-[103px] justify-between">{left.map(cell)}</div>
      <div className="ml-[3px] flex w-[115px] justify-between">{right.map(cell)}</div>
      <div className="ml-1">{cell("eye", 0)}</div>
    </div>
  );
}

function PropertyPanel() {
  return (
    <>
      <div className="flex h-4 shrink-0 items-center bg-white pl-0.5">
        {["wave", "category", "sortAz", "expand", "collapse"].map((name, i) => (
          <button
            key={name}
            type="button"
            aria-label={name}
            className={clsx("flex h-3 w-[13px] items-center justify-center", i < 2 && "bg-[#cfdcf5]")}
          >
            <Glyph name={name} size="size-[9px]" />
          </button>
        ))}
        <h2 className="ml-px text-[6px] font-bold text-[#333]">1 αντικ. τύπου 'Όροφος '</h2>
      </div>
      <div className="min-h-0 flex-[284] border border-[#8fa0ae] bg-white">
        <h3 className="flex h-[11px] items-center border border-[#a9d3ee] bg-[#e6f2fc] pl-[7px] font-bold text-[#333]">
          <span className="mr-1 text-[4px]">◢</span>
          Χαρακτηριστικά Ορόφου
        </h3>
        <table className="w-full table-fixed">
          <tbody>
            {properties.map((row) => (
              <tr key={row.id} className="h-[11px] text-[#777]">
                <th scope="row" className="w-[50%] p-0 pl-[23px] text-left font-normal leading-[11px]">
                  <label htmlFor={row.id}>{row.label}</label>
                </th>
                <td className="p-0">
                  <input
                    id={row.id}
                    defaultValue={row.value}
                    className={clsx(
                      "block h-[11px] w-full pl-0.5 leading-[11px] text-[#a33c3d] outline-none",
                      row.bold && "font-bold",
                    )}
                  />
                </td>
                <td className="w-1 p-0 text-center leading-[11px]">{row.mark}</td>
              </tr>
            ))}
          </tbody>
        </table>
      </div>
      <div className="mt-0.5 h-[38px] shrink-0 border border-[#a8b8c4] bg-[#dfe9f5]" />
    </>
  );
}

function StatusBar() {
  return (
    <footer className="flex h-2.5 shrink-0 border-t border-[#d5d5d5] bg-white leading-[9px] text-[#444]">
      <p className="w-[77px] pl-[3px]">X: 9,232 Y: 12,889</p>
      <button type="button" className="w-[25px] border-x border-[#d5d5d5] font-bold">
        Ισόγειο
      </button>
      <button type="button" className="w-[38px] text-[#777]">
        1ος Όροφος
      </button>
    </footer>
  );
}

function TaskItem({ label, icon, active }: { label: string; icon: ReactNode; active?: boolean }) {
  return (
    <button
      type="button"
      className={clsx(
        "flex h-5 shrink-0 items-center gap-0.5 whitespace-nowrap border-b border-[#5fa8d3] text-[6px] text-[#e8e8e8]",
        active ? "w-20 bg-[#505050] pl-1" : "w-[75px] pl-[3px]",
      )}
    >
      {icon}
      {label}
    </button>
  );
}

const RecorderIcon = () => (
  <svg viewBox="0 0 12 12" className="size-2.5" fill="none" aria-hidden="true">
    <circle cx="6" cy="6" r="4.500" stroke="#3d6f92" />
    <circle cx="6" cy="6" r="2" fill="#a6c9df" />
  </svg>
);

function Taskbar() {
  return (
    <footer className="flex h-5 shrink-0 items-center bg-[#1c1c1c] text-[6px] text-[#e4e4e4]">
      <button type="button" aria-label="Start" className="flex w-6 shrink-0 justify-center">
        <svg viewBox="0 0 9 9" className="size-2" fill="#f4f4f4">
          <path d="M0 1l4-.5V4H0zM5 .500 9 0v4H5zM0 5h4v3.500L0 8zM5 5h4v4l-4-.5z" />
        </svg>
      </button>
      <label className="flex h-5 w-36 shrink-0 items-center gap-1.5 bg-[#f0f0f0] pl-[5px] text-[7px]">
        <svg viewBox="0 0 10 10" className="size-[9px]" fill="none" stroke="#333">
          <circle cx="6" cy="4" r="3" />
          <path d="M4 6 1 9" />
        </svg>
        <input
          aria-label="Type here to search"
          placeholder="Type here to search"
          className="w-full bg-transparent text-black outline-none placeholder:text-[#444]"
        />
      </label>
      <div className="flex w-[78px] shrink-0 items-center justify-between pl-2">
        <svg viewBox="0 0 10 10" className="size-2" fill="none" stroke="#bbb">
          <path d="M1 1v1h5V1M1 9V8h5v1M1 3.500h5v3H1zM9 1v2M9 5v4" />
        </svg>
        <svg viewBox="0 0 12 12" className="size-3" aria-hidden="true">
          <path d="M1 1h4l1 2h5v8H1z" fill="#f5cc55" />
          <path d="M3 7h6v4H3z" fill="#3f8fd0" />
          <path d="M1 3h10v3H1z" fill="#ffe08a" />
        </svg>
        <svg viewBox="0 0 12 12" className="mr-2.5 size-3" fill="none" aria-hidden="true">
          <path d="M2 1q4-1.500 8 0 2 4 0 8-2 1-4 1l-2 2v-2Q2 10 1.500 9q-1.500-4 .500-8z" fill="#7d62dc" />
          <path d="M4 3q-1 1 .500 3T8 8.500L9 7.500 7.500 6.500l-.7.500L5.300 5.500l.400-1zM6.500 2.500Q9 3 9 5.500" fill="#fff" stroke="#e9e2ff" strokeWidth="0.500" />
        </svg>
      </div>
      <div className="flex gap-[5px]">
        <TaskItem
          label="TiSoft Emails - Goo..."
          icon={
            <svg viewBox="0 0 12 12" className="size-3" aria-hidden="true">
              <circle cx="6" cy="6" r="6" fill="#f3c221" />
              <path d="M6 6 .800 3A6 6 0 0 1 11.200 3z" fill="#e0402f" />
              <path d="M6 6 .800 3A6 6 0 0 0 6 12l2-4z" fill="#30a350" />
              <circle cx="6" cy="6" r="3" fill="#fff" />
              <circle cx="6" cy="6" r="2.300" fill="#3e82e8" />
            </svg>
          }
        />
        <TaskItem label="Screencast-O-Matic..." icon={<RecorderIcon />} />
        <TaskItem label="SOM-MainFrame-Z..." icon={<RecorderIcon />} />
        <TaskItem
          label="binteo.plumbproj * ..."
          active
          icon={
            <svg viewBox="0 0 12 12" className="size-3" aria-hidden="true">
              <path d="M1 10V7h2V4h2v3h2V5h4v5z" fill="#e4e4e4" />
              <path d="M4 4V2h3v1M1 11h10" stroke="#ddd" fill="none" />
              <path d="M4 3h2" stroke="#c33" />
            </svg>
          }
        />
      </div>
      <div className="ml-auto flex shrink-0 items-center">
        <svg viewBox="0 0 12 12" className="mr-1 size-3" aria-hidden="true">
          <path d="M1 11q-2-3 1-5 2-4 6-1 4 1 4 5l-1 1z" fill="#a9cdf3" />
          <circle cx="9" cy="3" r="3" fill="#d8362c" />
          <path d="M9 1.500v3" stroke="#fff" strokeWidth="0.800" />
        </svg>
        <span className="mr-2.5 w-[46px] whitespace-nowrap text-[7px]">0°C Νεφώσεις</span>
        <svg viewBox="0 0 72 12" className="h-3 w-[72px]" fill="none" stroke="#bdbdbd" aria-hidden="true">
          <path d="m3 8 3-3 3 3" />
          <path d="M15 4h5v4h-5zM16 2h3M16 10h3" />
          <path d="M26 8q-1-4 3-5 3 0 4 3" fill="#eee" />
          <circle cx="31" cy="8" r="2.500" fill="#3a9be0" stroke="none" />
          <path d="M40 2h3v5h-3zM41 7h1v3h-1z" fill="#fff" />
          <path d="M50 3h7v5h-5M52 10h4M49 6v3" />
          <path d="M61 5h1l2-2v6l-2-2h-1zM66 4q1 2 0 4M68 3q2 3 0 6" />
        </svg>
        <span className="ml-1 w-4">ΕΛ</span>
        <span className="w-9 text-center leading-[10px]">
          1:20 μμ
          <br />
          19/1/2026
        </span>
        <svg viewBox="0 0 16 12" className="mr-1 h-3 w-4" aria-hidden="true">
          <path d="M2 1h8v7H6l-2 2V8H2z" fill="#f4f4f4" />
          <path d="M3 3h6M3 5h6" stroke="#777" strokeWidth="0.700" />
          <circle cx="10" cy="8" r="3.500" fill="#333" stroke="#aaa" strokeWidth="0.500" />
          <text x="8.500" y="10" className="fill-white text-[5px]">
            4
          </text>
        </svg>
        <span className="h-5 w-1 border-l border-[#555]" />
      </div>
    </footer>
  );
}

export default function App() {
  return (
    <div className="flex h-screen flex-col overflow-hidden bg-white font-['Open_Sans','Noto_Sans',sans-serif] text-[5px]">
      <TitleBar />
      <TabBar />
      <Ribbon />
      <main className="flex min-h-0 flex-1">
        <div className="flex min-w-0 flex-1 flex-col">
          <div className="flex min-h-0 flex-1">
            <div className="flex min-w-0 flex-1 flex-col">
              <PlanCanvas />
            </div>
            <ScrollBar />
          </div>
          <StatusBar />
        </div>
        <aside className="ml-[3px] flex w-[359px] shrink-0 flex-col bg-[#d3dde6]">
          <ModelView />
          <ViewTools />
          <PropertyPanel />
        </aside>
      </main>
      <Taskbar />
    </div>
  );
}
